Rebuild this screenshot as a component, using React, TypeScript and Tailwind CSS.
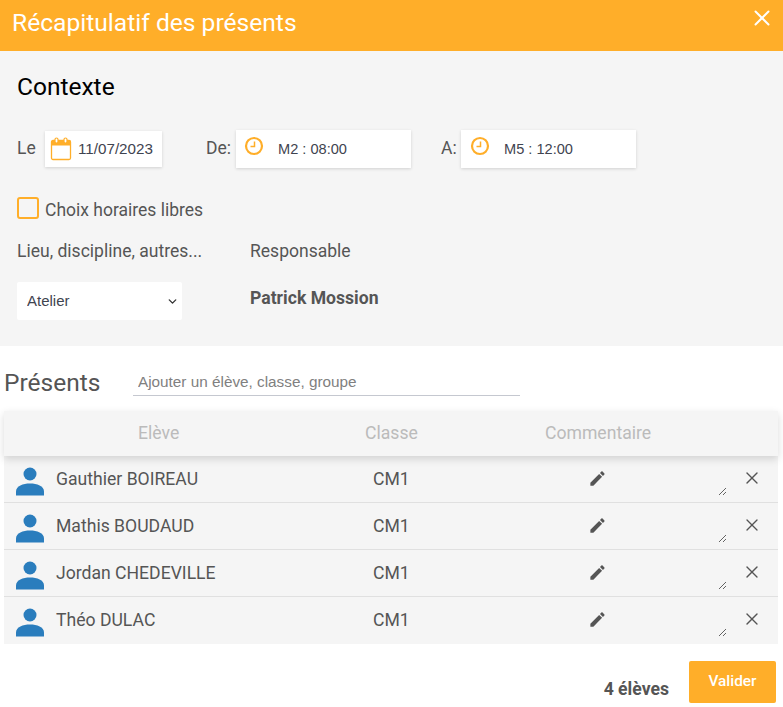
import { ChevronDown, X } from "lucide-react";

const students = ["Gauthier BOIREAU", "Mathis BOUDAUD", "Jordan CHEDEVILLE", "Théo DULAC"];

function ClockIcon() {
  return (
    <svg width="20" height="20" viewBox="0 0 20 20" fill="none" stroke="#ffae29" className="shrink-0">
      <circle cx="10" cy="10" r="8" strokeWidth="2.2" />
      <path d="M10.500 5.500v5H6.500" strokeWidth="1.500" />
    </svg>
  );
}

function CalendarIcon() {
  return (
    <svg width="22" height="24" viewBox="0 0 22 24" fill="none" stroke="#ffae29" className="shrink-0">
      <rect x="1.500" y="3.500" width="19" height="19" rx="1.500" strokeWidth="1.300" />
      <path d="M1.500 5a1.500 1.500 0 0 1 1.500-1.500h16a1.500 1.500 0 0 1 1.500 1.500v3h-19z" fill="#ffae29" strokeWidth="1" />
      <rect x="5" y="1" width="3" height="5" rx="1.500" fill="#fff" strokeWidth="1.200" />
      <rect x="14" y="1" width="3" height="5" rx="1.500" fill="#fff" strokeWidth="1.200" />
    </svg>
  );
}

function PersonIcon() {
  return (
    <svg width="28" height="29" viewBox="0 0 28 29" fill="#2a7dbd" className="shrink-0">
      <circle cx="14" cy="7" r="6.500" />
      <path d="M0 28.500v-4C0 19 7 16.500 14 16.500s14 2.500 14 8v4z" />
    </svg>
  );
}

function EditIcon() {
  return (
    <svg width="19" height="19" viewBox="0 0 24 24" fill="#555" className="shrink-0 mt-[13px]">
      <path d="M3 17.250V21h3.750L17.810 9.940l-3.750-3.750L3 17.250zM20.710 7.040c.39-.39.39-1.020 0-1.410l-2.340-2.340c-.39-.39-1.020-.39-1.410 0l-1.830 1.830 3.750 3.750 1.830-1.830z" />
    </svg>
  );
}

function TimeField({ label, value, labelClass, boxClass }: { label: string; value: string; labelClass: string; boxClass: string }) {
  return (
    <div className="flex items-start">
      <span className={labelClass}>{label}</span>
      <div className={boxClass}>
        <div className="-mt-1.5">
          <ClockIcon />
        </div>
        <span className="ml-[14px] pt-[2px] text-[14.600px] text-[#3f4450] font-['Liberation_Sans',sans-serif]">{value}</span>
      </div>
    </div>
  );
}

export default function App() {
  return (
    <div className="w-[783px] h-[707px] overflow-hidden bg-white font-['Roboto',sans-serif] text-[#555]">
      <div className="h-[51px] bg-[#ffae29] flex items-start justify-between pl-3 pr-[8px]">
        <h1 className="text-[24.600px] leading-[46px] text-white">Récapitulatif des présents</h1>
        <X size={26} color="#fff" strokeWidth={1.800} className="mt-[5px]" />
      </div>

      <div className="h-[295px] bg-[#f5f5f5] pl-[17px]">
        <h2 className="text-[24.500px] leading-[28px] text-black pt-[22px] h-[50px]">Contexte</h2>
        <div className="flex items-start mt-[29px] h-[38px]">
          <span className="text-[17.500px] leading-[24px] mt-[6px] w-[28px]">Le</span>
          <div className="mt-px w-[117px] h-[36px] bg-white shadow-[0_1px_3px_rgba(0,0,0,0.15)] flex items-center pl-[5px]">
            <CalendarIcon />
            <span className="ml-[6px] text-[15.200px] text-[#3f4450] font-['Liberation_Sans',sans-serif]">11/07/2023</span>
          </div>
          <div className="ml-[44px]">
            <TimeField
              label="De:"
              value="M2 : 08:00"
              labelClass="text-[17.500px] leading-[24px] mt-[6px] w-[30px]"
              boxClass="w-[175px] h-[38px] bg-white shadow-[0_1px_3px_rgba(0,0,0,0.15)] flex items-center pl-[8px]"
            />
          </div>
          <div className="ml-[30px]">
            <TimeField
              label="A:"
              value="M5 : 12:00"
              labelClass="text-[17.500px] leading-[24px] mt-[6px] w-[20px]"
              boxClass="w-[175px] h-[38px] bg-white shadow-[0_1px_3px_rgba(0,0,0,0.15)] flex items-center pl-[9px]"
            />
          </div>
        </div>

        <label className="flex items-start mt-[29px] h-[22px]">
          <span className="w-[22px] h-[22px] rounded-[3px] border-2 border-[#ffae29]" />
          <span className="ml-[6px] text-[17.500px] leading-[26px]">Choix horaires libres</span>
        </label>

        <div className="flex mt-[20px] text-[17.550px] leading-[24px]">
          <span className="w-[233px]">Lieu, discipline, autres...</span>
          <span>Responsable</span>
        </div>

        <div className="flex items-start mt-[19px]">
          <div className="relative w-[165px] h-[38px]">
            <select
              defaultValue="Atelier"
              className="w-full h-full appearance-none bg-white rounded-[2px] pl-[10px] text-[15px] text-[#3f4450] font-['Liberation_Sans',sans-serif]"
            >
              <option>Atelier</option>
            </select>
            <ChevronDown size={13} color="#333" strokeWidth={2.500} className="absolute right-[3px] top-[13px]" />
          </div>
          <span className="ml-[68px] text-[17.600px] leading-[32px] font-bold">Patrick Mossion</span>
        </div>
      </div>

      <div className="flex items-start h-[65px] pl-1">
        <span className="text-[24.500px] leading-[28px] mt-[23px] w-[129px]">Présents</span>
        <input
          placeholder="Ajouter un élève, classe, groupe"
          className="mt-[20px] w-[387px] h-[30px] pl-[5px] pt-[2px] border-b border-[#c5c8d0] text-[15.300px] outline-none placeholder:text-[#808080] font-['Liberation_Sans',sans-serif]"
        />
      </div>

      <div className="ml-1 w-[774px]">
        <div className="relative z-10 h-[45px] bg-[#f5f5f5] shadow-[0_3px_8px_rgba(0,0,0,0.15)] flex items-center text-[17.600px] text-[#bbb]">
          <span className="ml-[134px] w-[227px]">Elève</span>
          <span className="w-[180px]">Classe</span>
          <span>Commentaire</span>
        </div>
        {students.map((name, i) => (
          <div
            key={name}
            className={`h-[47px] bg-[#f5f5f5] flex items-start ${i < students.length - 1 ? "border-b border-[#e0e0e0]" : ""}`}
          >
            <div className="ml-[12px] mt-[11px]">
              <PersonIcon />
            </div>
            <span className="ml-[12px] mt-[12px] w-[317px] text-[17.600px] leading-[22px]">{name}</span>
            <span className="mt-[12px] w-[215px] text-[17.600px] leading-[22px]">CM1</span>
            <EditIcon />
            <textarea className="ml-[-14px] mt-[4px] w-[134px] h-[36px] bg-transparent outline-none resize" />
            <X size={20} color="#555" strokeWidth={1.600} className="ml-[15px] mt-[12px]" />
          </div>
        ))}
      </div>

      <div className="flex items-start justify-end mt-[17px] pr-[7px]">
        <span className="font-bold text-[17.600px] mt-[15px] mr-[20px]">4 élèves</span>
        <button className="w-[87px] h-[42px] rounded-[2px] bg-[#ffae29] text-white text-[15.400px] font-medium pb-[1px]">Valider</button>
      </div>
    </div>
  );
}
